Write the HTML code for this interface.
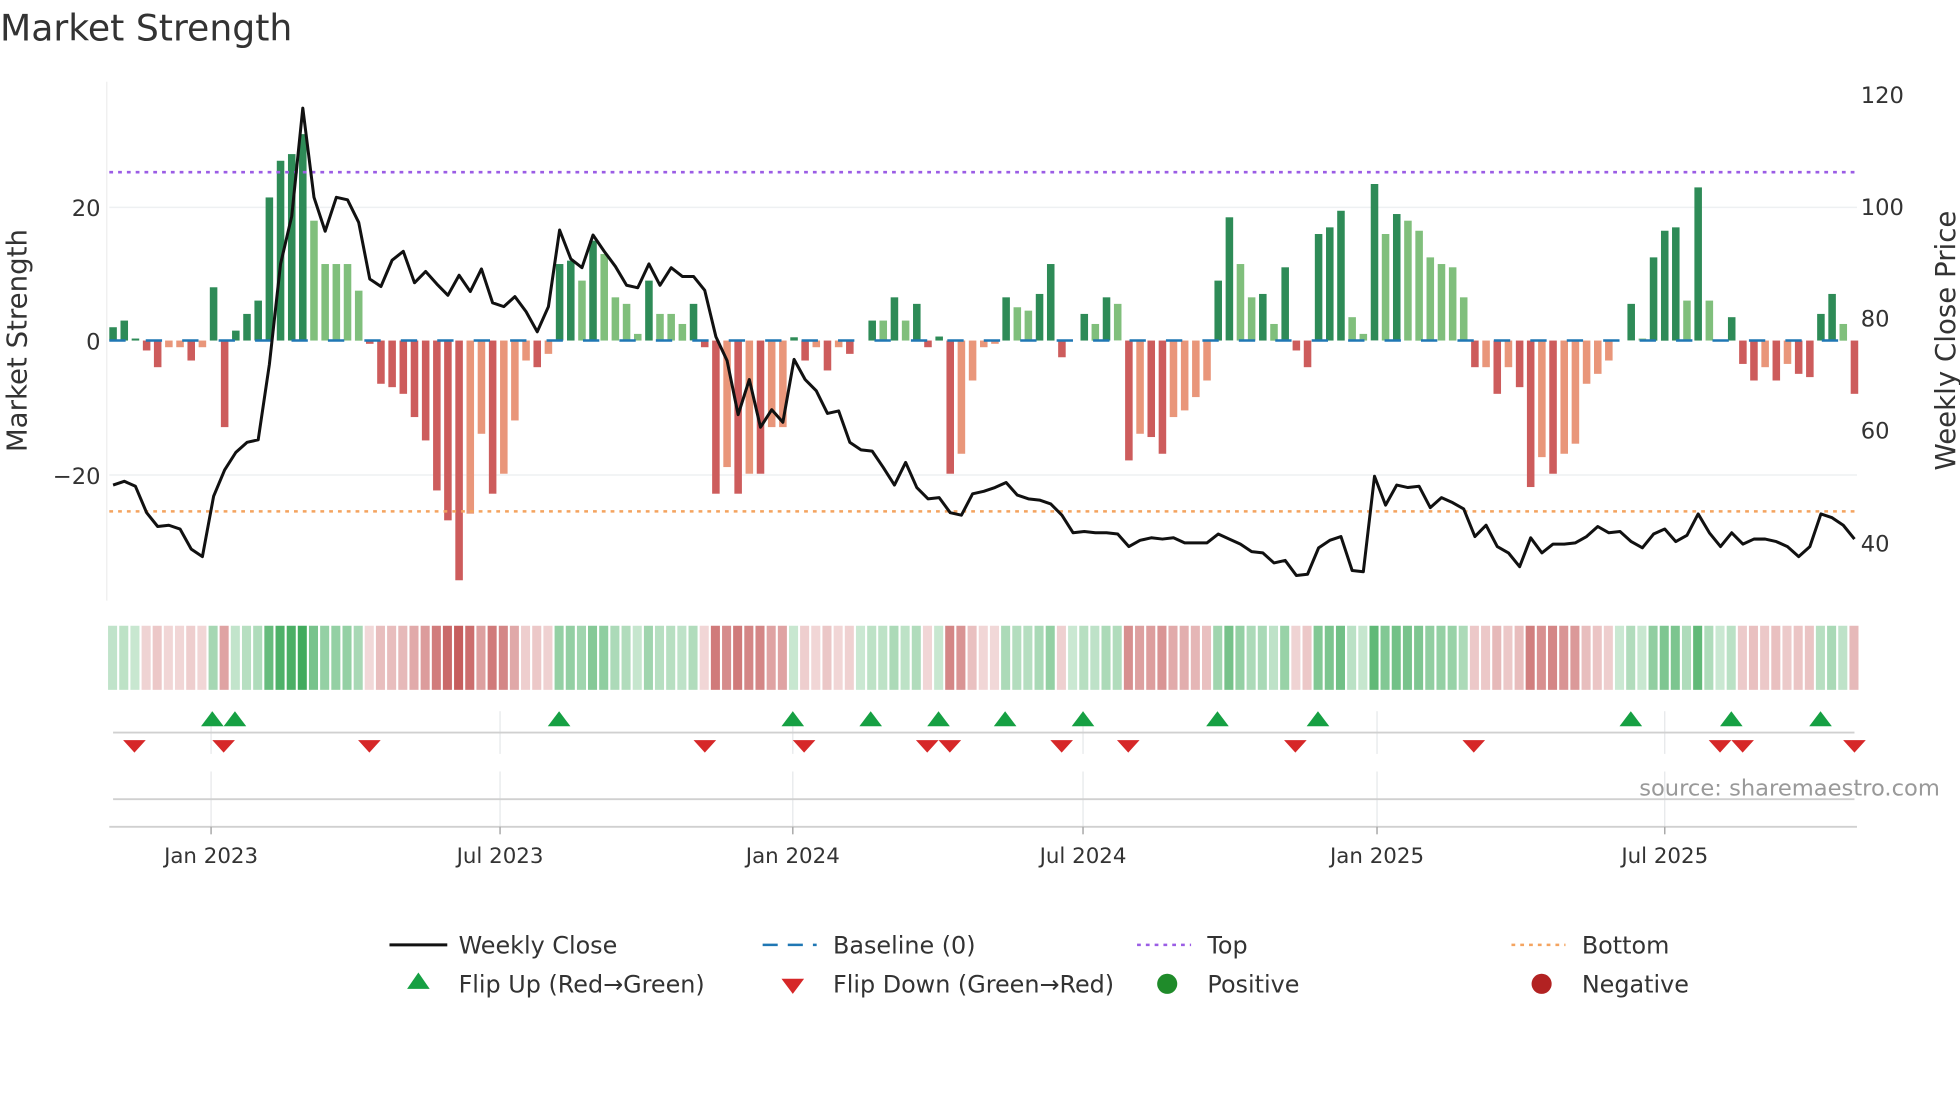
<!DOCTYPE html>
<html><head><meta charset="utf-8"><style>
html,body{margin:0;padding:0;background:#fff;width:1960px;height:1102px;overflow:hidden}
svg{display:block}
text{font-family:"DejaVu Sans","Liberation Sans",sans-serif;fill:#333}
</style></head><body>
<svg id="s" width="1960" height="1102" viewBox="0 0 1560 877" xmlns="http://www.w3.org/2000/svg">
<text x="0" y="32" font-size="28.8">Market Strength</text>
<line x1="85" y1="65" x2="85" y2="478" stroke="#eee" stroke-width="1"/>
<line x1="87" y1="165" x2="1478" y2="165" stroke="#eef0f2" stroke-width="1.2"/>
<line x1="87" y1="378" x2="1478" y2="378" stroke="#eef0f2" stroke-width="1.2"/>
<text x="80" y="172" font-size="18" text-anchor="end">20</text>
<text x="80" y="278" font-size="18" text-anchor="end">0</text>
<text x="80" y="385" font-size="18" text-anchor="end">−20</text>
<text transform="translate(21,271) rotate(-90)" font-size="22" text-anchor="middle">Market Strength</text>
<text x="1481" y="82" font-size="18">120</text>
<text x="1481" y="171" font-size="18">100</text>
<text x="1481" y="260" font-size="18">80</text>
<text x="1481" y="349" font-size="18">60</text>
<text x="1481" y="439" font-size="18">40</text>
<text transform="translate(1556,271) rotate(-90)" font-size="22" text-anchor="middle">Weekly Close Price</text>
<g id="bars"></g>
<line x1="87" y1="271" x2="1478" y2="271" stroke="#1f77b4" stroke-width="2" stroke-dasharray="13,16"/>
<line x1="87" y1="137" x2="1478" y2="137" stroke="#9b5de5" stroke-width="2" stroke-dasharray="3,4"/>
<line x1="87" y1="407" x2="1478" y2="407" stroke="#f4a460" stroke-width="2" stroke-dasharray="3,4"/>
<polyline id="price" fill="none" stroke="#111" stroke-width="2.4" stroke-linejoin="round"/>
<g id="heat"></g>
<g stroke="#e6e8ea" stroke-width="1">
<line x1="168" y1="566" x2="168" y2="600"/><line x1="398" y1="566" x2="398" y2="600"/><line x1="631" y1="566" x2="631" y2="600"/><line x1="862" y1="566" x2="862" y2="600"/><line x1="1096" y1="566" x2="1096" y2="600"/><line x1="1325" y1="566" x2="1325" y2="600"/>
<line x1="168" y1="614" x2="168" y2="658"/><line x1="398" y1="614" x2="398" y2="658"/><line x1="631" y1="614" x2="631" y2="658"/><line x1="862" y1="614" x2="862" y2="658"/><line x1="1096" y1="614" x2="1096" y2="658"/><line x1="1325" y1="614" x2="1325" y2="658"/>
</g>
<line x1="90" y1="583" x2="1476" y2="583" stroke="#d0d0d0" stroke-width="1.5"/>
<line x1="90" y1="636" x2="1476" y2="636" stroke="#d0d0d0" stroke-width="1.5"/>
<line x1="87" y1="658" x2="1478" y2="658" stroke="#d0d0d0" stroke-width="1.5"/>
<g stroke="#aaa" stroke-width="1.2"><line x1="168" y1="658" x2="168" y2="664"/><line x1="398" y1="658" x2="398" y2="664"/><line x1="631" y1="658" x2="631" y2="664"/><line x1="862" y1="658" x2="862" y2="664"/><line x1="1096" y1="658" x2="1096" y2="664"/><line x1="1325" y1="658" x2="1325" y2="664"/></g>
<g id="marks"></g>
<g font-size="17" text-anchor="middle">
<text x="168" y="687">Jan 2023</text><text x="398" y="687">Jul 2023</text><text x="631" y="687">Jan 2024</text><text x="862" y="687">Jul 2024</text><text x="1096" y="687">Jan 2025</text><text x="1325" y="687">Jul 2025</text>
</g>
<text x="1544" y="633" font-size="18" text-anchor="end" style="fill:#999">source: sharemaestro.com</text>
<g font-size="19">
<line x1="310" y1="752" x2="356" y2="752" stroke="#111" stroke-width="2.4"/><text x="365" y="759">Weekly Close</text>
<line x1="607" y1="752" x2="650" y2="752" stroke="#1f77b4" stroke-width="2" stroke-dasharray="12,8"/><text x="663" y="759">Baseline (0)</text>
<line x1="905" y1="752" x2="948" y2="752" stroke="#9b5de5" stroke-width="2" stroke-dasharray="3,4"/><text x="961" y="759">Top</text>
<line x1="1203" y1="752" x2="1246" y2="752" stroke="#f4a460" stroke-width="2" stroke-dasharray="3,4"/><text x="1259" y="759">Bottom</text>
<polygon points="333,774 342,787 324,787" fill="#16a043"/><text x="365" y="790">Flip Up (Red→Green)</text>
<polygon points="622,779 640,779 631,791" fill="#d62728"/><text x="663" y="790">Flip Down (Green→Red)</text>
<circle cx="929" cy="783" r="8" fill="#1f8b2a"/><text x="961" y="790">Positive</text>
<circle cx="1227" cy="783" r="8" fill="#b22222"/><text x="1259" y="790">Negative</text>
</g>
</svg>
<script>
var NS="http://www.w3.org/2000/svg";
function el(n,a,p){var e=document.createElementNS(NS,n);for(var k in a)e.setAttribute(k,a[k]);p.appendChild(e);return e;}
var B=[[2,1],[3,1],[0.3,1],[-1.5,3],[-4,3],[-1,4],[-1,4],[-3,3],[-1,4],[8,1],[-13,3],[1.5,1],[4,1],[6,1],[21.5,1],[27,1],[28,1],[31,1],[18,2],[11.5,2],[11.5,2],[11.5,2],[7.5,2],[-0.5,3],[-6.5,3],[-7,3],[-8,3],[-11.5,3],[-15,3],[-22.5,3],[-27,3],[-36,3],[-26,4],[-14,4],[-23,3],[-20,4],[-12,4],[-3,4],[-4,3],[-2,4],[11.5,1],[12,1],[9,2],[15,1],[13,2],[6.5,2],[5.5,2],[1,2],[9,1],[4,2],[4,2],[2.5,2],[5.5,1],[-1,3],[-23,3],[-19,4],[-23,3],[-20,4],[-20,3],[-13,4],[-13,4],[0.5,1],[-3,3],[-1,4],[-4.5,3],[-1,4],[-2,3],[0,4],[3,1],[3,2],[6.5,1],[3,2],[5.5,1],[-1,3],[0.6,1],[-20,3],[-17,4],[-6,4],[-1,4],[-0.5,4],[6.5,1],[5,2],[4.5,2],[7,1],[11.5,1],[-2.5,3],[0,4],[4,1],[2.5,2],[6.5,1],[5.5,2],[-18,3],[-14,4],[-14.5,3],[-17,3],[-11.5,4],[-10.5,4],[-8.5,4],[-6,4],[9,1],[18.5,1],[11.5,2],[6.5,2],[7,1],[2.5,2],[11,1],[-1.5,3],[-4,3],[16,1],[17,1],[19.5,1],[3.5,2],[1,2],[23.5,1],[16,2],[19,1],[18,2],[16.5,2],[12.5,2],[11.5,2],[11,2],[6.5,2],[-4,3],[-4,4],[-8,3],[-4,4],[-7,3],[-22,3],[-17.5,4],[-20,3],[-17,4],[-15.5,4],[-6.5,4],[-5,4],[-3,4],[0,4],[5.5,1],[0.3,2],[12.5,1],[16.5,1],[17,1],[6,2],[23,1],[6,2],[0,4],[3.5,1],[-3.5,3],[-6,3],[-4,4],[-6,3],[-3.5,4],[-5,3],[-5.5,3],[4,1],[7,1],[2.5,2],[-8,3]];
var P=[386,383,387,408,419,418,421,437,443,395,374,360,352,350,290,210,172,86,157,184,157,159,177,222,228,207,200,225,216,226,235,219,232,214,241,244,236,248,264,244,183,206,213,187,200,212,227,229,210,227,213,220,220,231,268,287,330,302,340,326,336,286,302,311,329,327,352,358,359,372,386,368,388,397,396,408,410,393,391,388,384,394,397,398,401,410,424,423,424,424,425,435,430,428,429,428,432,432,432,425,429,433,439,440,448,446,458,457,436,430,427,454,455,379,402,386,388,387,404,396,400,405,427,418,435,440,451,428,440,433,433,432,427,419,424,423,431,436,425,421,431,426,409,424,435,424,433,429,429,431,435,443,435,409,412,418,429];
var C={1:"#2e8b57",2:"#80bf7c",3:"#cd5c5c",4:"#e9967a"};
var n=B.length, dx=(1476-90)/(n-1);
var gb=document.getElementById("bars"),gh=document.getElementById("heat");
var pts=[];
for(var i=0;i<n;i++){
 var x=90+dx*i,v=B[i][0],h=Math.abs(v)*5.3;
 if(h>0.3) el("rect",{x:(x-3).toFixed(1),y:(v>0?271-h:271).toFixed(1),width:6,height:h.toFixed(1),fill:C[B[i][1]]},gb);
 var a=Math.min(1,Math.abs(v)/30), col;
 if(v>=0){col="rgba(65,171,93,"+(0.28+0.72*a).toFixed(2)+")";}else{col="rgba(195,85,85,"+(0.22+0.73*a).toFixed(2)+")";}
 el("rect",{x:(x-4).toFixed(1),y:498,width:7.2,height:51,fill:col},gh);
 if(i<P.length) pts.push(x.toFixed(1)+","+P[i]);
}
document.getElementById("price").setAttribute("points",pts.join(" "));
var gm=document.getElementById("marks");
[169,187,445,631,693,747,800,862,969,1049,1298,1378,1449].forEach(function(x){el("polygon",{points:x+",566 "+(x+9)+",578 "+(x-9)+",578",fill:"#16a043"},gm);});
[107,178,294,561,640,738,756,845,898,1031,1173,1369,1387,1476].forEach(function(x){el("polygon",{points:(x-9)+",589 "+(x+9)+",589 "+x+",599",fill:"#d62728"},gm);});
</script>
</body></html>
